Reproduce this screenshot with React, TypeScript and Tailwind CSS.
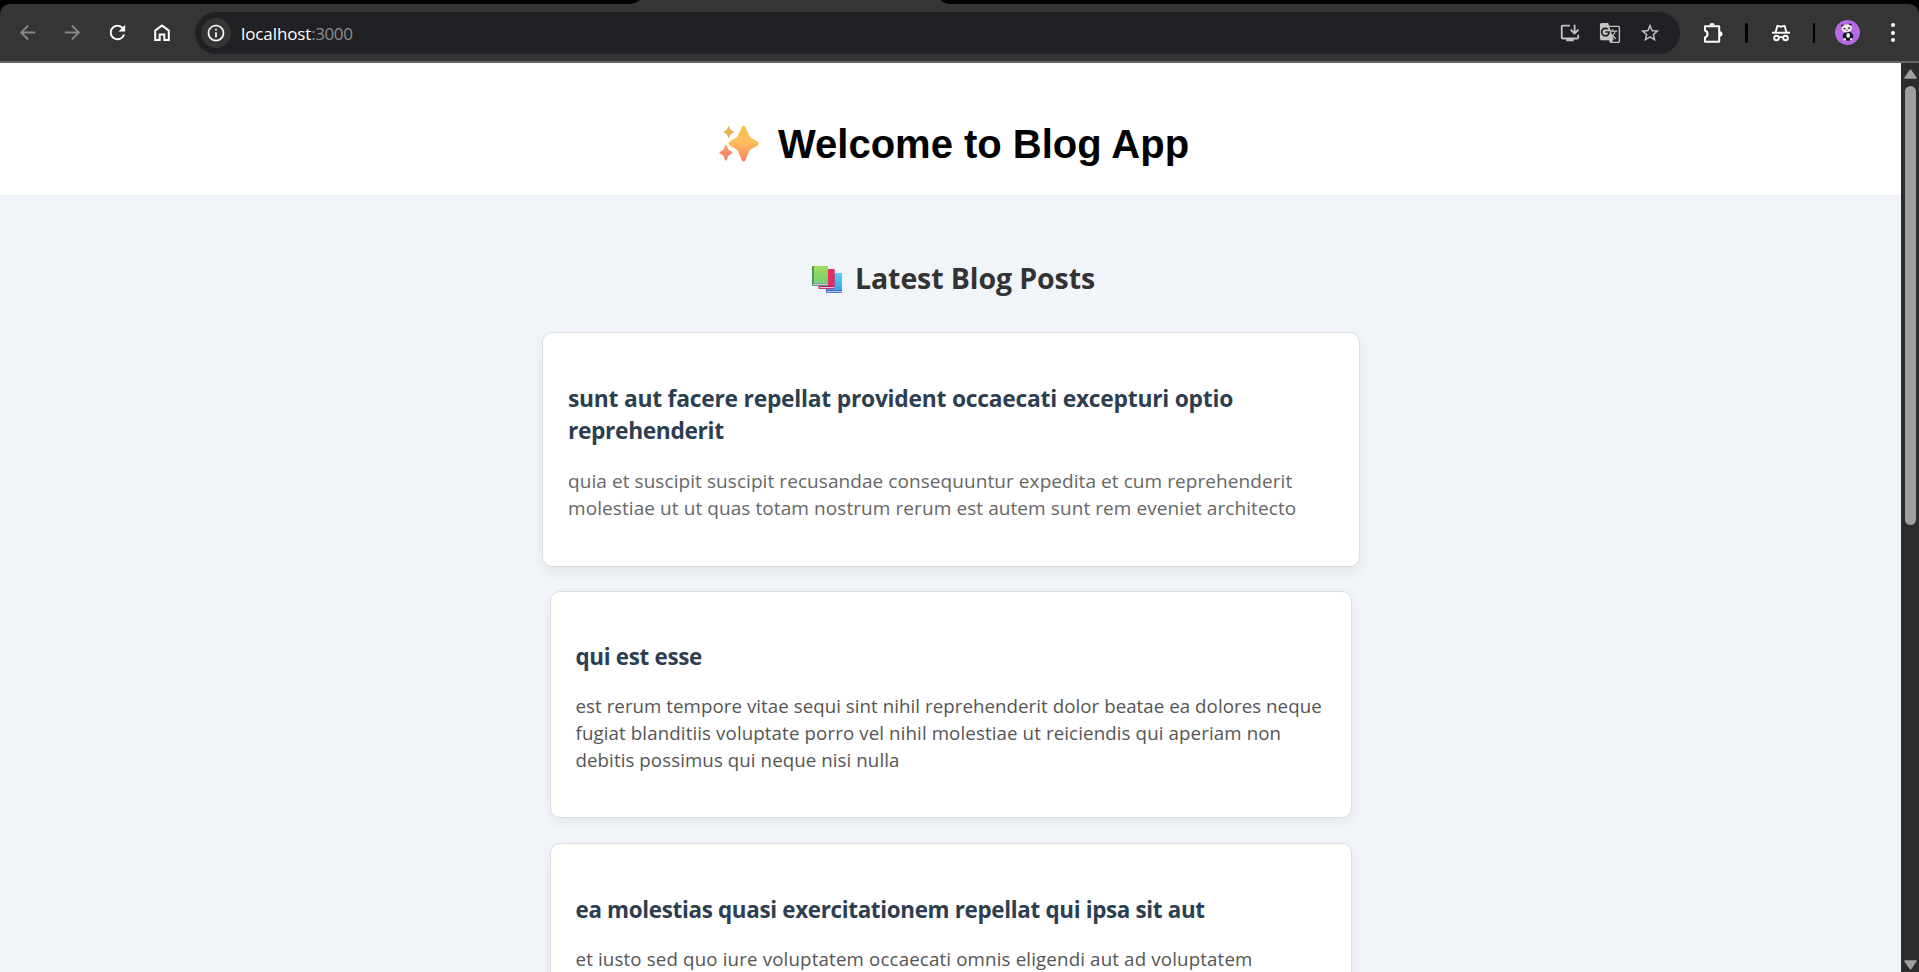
import React from "react";
import {
  MdArrowBack,
  MdArrowForward,
  MdGTranslate,
  MdInfoOutline,
  MdInstallDesktop,
  MdRefresh,
  MdStarBorder,
} from "react-icons/md";

type Line = { text: string; tracking: string };
type Post = { title: Line[]; body: Line[]; box: string; titleSize: string; bodySize: string };

const posts: Post[] = [
  {
    box: "mb-6 h-[235px] w-[818px] pt-[50px] pl-[25.5px] shadow-[0_6px_12px_rgba(0,0,0,0.06)]",
    titleSize: "text-[22.8px] mb-[21px]",
    bodySize: "text-[19px] text-[#666]",
    title: [
      { text: "sunt aut facere repellat provident occaecati excepturi optio", tracking: "tracking-[-0.23px]" },
      { text: "reprehenderit", tracking: "tracking-[-0.38px]" },
    ],
    body: [
      { text: "quia et suscipit suscipit recusandae consequuntur expedita et cum reprehenderit", tracking: "tracking-[0.07px]" },
      { text: "molestiae ut ut quas totam nostrum rerum est autem sunt rem eveniet architecto", tracking: "tracking-[0.08px]" },
    ],
  },
  {
    box: "mb-[25px] h-[227px] w-[802px] pt-[49px] pl-[25px] shadow-[0_4px_12px_rgba(0,0,0,0.06)]",
    titleSize: "text-[22.4px] mb-[19px]",
    bodySize: "text-[18.7px] text-[#555]",
    title: [{ text: "qui est esse", tracking: "tracking-[-0.3px]" }],
    body: [
      { text: "est rerum tempore vitae sequi sint nihil reprehenderit dolor beatae ea dolores neque", tracking: "tracking-[0.055px]" },
      { text: "fugiat blanditiis voluptate porro vel nihil molestiae ut reiciendis qui aperiam non", tracking: "tracking-[0.115px]" },
      { text: "debitis possimus qui neque nisi nulla", tracking: "tracking-[0.08px]" },
    ],
  },
  {
    box: "h-[227px] w-[802px] pt-[50px] pl-[25px] shadow-[0_4px_12px_rgba(0,0,0,0.06)]",
    titleSize: "text-[22.4px] mb-[19px]",
    bodySize: "text-[18.7px] text-[#555]",
    title: [{ text: "ea molestias quasi exercitationem repellat qui ipsa sit aut", tracking: "tracking-[-0.32px]" }],
    body: [
      { text: "et iusto sed quo iure voluptatem occaecati omnis eligendi aut ad voluptatem", tracking: "tracking-[0.16px]" },
    ],
  },
];

function HomeIcon() {
  return (
    <svg width="18" height="18" viewBox="0 0 18 18" fill="none" stroke="#fff" strokeWidth="2">
      <path d="M2.2 16V6.6L9 1.5l6.8 5.1V16h-4.5v-5.6H6.7V16z" />
    </svg>
  );
}

function ExtensionIcon() {
  return (
    <svg width="24" height="24" viewBox="0 0 24 24">
      <path
        d="M4 5.2h14.2v15.6H4v-4.3c1.7-.5 2.5-1.8 2.5-3.5S5.700 10 4 9.500z"
        fill="none"
        stroke="#fff"
        strokeWidth="2"
        strokeLinejoin="round"
      />
      <path d="M8.500 4.600a2.600 2.600 0 0 1 5.200 0zM18.800 10.300a2.700 2.700 0 0 1 0 5.400z" fill="#fff" />
    </svg>
  );
}

function IncognitoIcon() {
  return (
    <svg width="20" height="18" viewBox="0 0 20 18" fill="none" stroke="#fff" strokeWidth="1.900">
      <path d="M1 8.700h18" />
      <path d="M4.600 8.200L6.400 1.800l3.600.9 3.600-.9 1.800 6.400" strokeLinejoin="round" />
      <circle cx="5.500" cy="14" r="2.300" />
      <circle cx="14.500" cy="14" r="2.300" />
      <path d="M7.800 13.600c1.300-.7 3.100-.7 4.400 0" />
    </svg>
  );
}

function PandaAvatar() {
  return (
    <svg className="ml-5" width="25" height="25" viewBox="0 0 25 25">
      <circle cx="12.500" cy="12.500" r="12.500" fill="#b56ae4" />
      <ellipse cx="13" cy="16.200" rx="5.200" ry="4.600" fill="#16131a" />
      <ellipse cx="13.200" cy="15.500" rx="1.900" ry="2.400" fill="#ece8ee" />
      <circle cx="7.600" cy="6" r="1.400" fill="#16131a" />
      <circle cx="15.200" cy="4.800" r="1.400" fill="#16131a" />
      <ellipse cx="11.700" cy="8.400" rx="5.200" ry="4" fill="#f2eff3" transform="rotate(-8 11.700 8.400)" />
      <ellipse cx="9.500" cy="8.800" rx="1.300" ry=".8" fill="#29242c" />
      <ellipse cx="14" cy="8.100" rx="1.300" ry=".8" fill="#29242c" />
      <circle cx="12" cy="10.400" r=".6" fill="#29242c" />
      <circle cx="9.800" cy="19.300" r="1.200" fill="#f2eff3" />
      <circle cx="16.100" cy="19.100" r="1.200" fill="#f2eff3" />
    </svg>
  );
}

function Sparkles() {
  return (
    <svg width="40" height="36" viewBox="0 0 40 36" role="img" aria-label="sparkles">
      <defs>
        <linearGradient id="spark" x1="0" y1="0" x2="0" y2="1">
          <stop offset="0" stopColor="#f5c04f" />
          <stop offset="0.45" stopColor="#fdbf5c" />
          <stop offset="1" stopColor="#fb8065" />
        </linearGradient>
        <linearGradient id="sparkTop" x1="0" y1="0" x2="0" y2="1">
          <stop offset="0" stopColor="#ecbc50" />
          <stop offset="1" stopColor="#eda563" />
        </linearGradient>
        <linearGradient id="sparkLow" x1="0" y1="0" x2="0" y2="1">
          <stop offset="0" stopColor="#fd9a6c" />
          <stop offset="1" stopColor="#fa7a6c" />
        </linearGradient>
      </defs>
      <path
        d="M22.700 1.500c.5-1.900 3.300-1.900 3.800 0l3.200 6.900c.8 2 1.700 3.300 3.700 4.100l5.300 3.200c1.400.8 1.400 3 0 3.700l-5.300 3c-2 .9-3.100 2-3.800 4.100l-3.100 7.500c-.5 1.700-3.300 1.700-3.800 0l-3.100-7.500c-.7-2.100-1.800-3.200-3.800-4.100l-5.300-3c-1.400-.7-1.400-2.900 0-3.700l5.300-3.200c2-.8 2.900-2.100 3.700-4.100z"
        fill="url(#spark)"
      />
      <path
        d="M9.100.7c.3-.8 1-.8 1.300 0l1.300 3.100 2.700 1.600c.7.3.7 1 0 1.300l-2.700 1.500-1.300 3c-.3.800-1 .8-1.300 0L7.800 8.200 5.100 6.700c-.7-.3-.7-1 0-1.300l2.700-1.600z"
        fill="url(#sparkTop)"
      />
      <path
        d="M6.200 19.500c.3-.9 1.200-.9 1.500 0l1.700 3.900 3.600 2.700c.7.400.7 1 0 1.400l-3.600 2.300-1.700 4.300c-.3.9-1.200.9-1.500 0l-1.700-4.300L.9 27.500c-.7-.4-.7-1 0-1.400l3.600-2.700z"
        fill="url(#sparkLow)"
      />
    </svg>
  );
}

function Books() {
  return (
    <svg width="30" height="27" viewBox="0 0 30 27" role="img" aria-label="books">
      <defs>
        <linearGradient id="green" x1="0" y1="0" x2="0" y2="1">
          <stop offset="0" stopColor="#a3dc53" />
          <stop offset="1" stopColor="#78cf79" />
        </linearGradient>
        <linearGradient id="blue" x1="0" y1="0" x2="0" y2="1">
          <stop offset="0" stopColor="#5accfa" />
          <stop offset="1" stopColor="#35a8ee" />
        </linearGradient>
      </defs>
      <rect x="14" y="7" width="16" height="20" rx="1" fill="#4166c4" />
      <rect x="15" y="7" width="15" height="17" rx=".6" fill="url(#blue)" />
      <rect x="15" y="25" width="15" height="1.200" fill="#b9c5ff" />
      <rect x="6.500" y="3" width="16" height="20" rx="1" fill="#a91b52" />
      <rect x="8" y="3" width="14.500" height="17.200" rx=".6" fill="#e32f63" />
      <rect x="7.500" y="21" width="15" height="1.200" fill="#f3bfe6" />
      <rect x="0" y="0" width="16" height="20" rx="1" fill="#43904f" />
      <rect x="1.800" y="0" width="14.200" height="17" rx=".6" fill="url(#green)" />
      <rect x="1" y="17.600" width="15" height="1.600" fill="#d9c3ec" />
    </svg>
  );
}

function Toolbar() {
  return (
    <div className="h-[63px] shrink-0 bg-black">
      <div className="flex h-1 justify-start pl-[630px]">
        <div className="h-1 w-[320px] bg-[#353535] [clip-path:polygon(3%_0,97%_0,98%_60%,100%_100%,0_100%,2%_60%)]" />
      </div>
      <div className="flex h-[59px] items-center rounded-t-[10px] border-b-2 border-[#666] bg-[#353535] pl-[5px]">
        <div className="flex w-[45px] justify-center text-[#868686]">
          <MdArrowBack size={23} />
        </div>
        <div className="flex w-[45px] justify-center text-[#868686]">
          <MdArrowForward size={23} />
        </div>
        <div className="flex w-[45px] justify-center text-white">
          <MdRefresh size={23} />
        </div>
        <div className="flex w-[44px] justify-center">
          <HomeIcon />
        </div>
        <div className="ml-[11px] flex h-[42px] w-[1485px] items-center rounded-full bg-[#202124] pl-1.5 pr-[19px]">
          <div className="flex size-[30px] items-center justify-center rounded-full bg-[#353535] text-white">
            <MdInfoOutline size={20} />
          </div>
          <div className="ml-2.5 flex-1 pt-0.5 text-[17px] leading-6">
            <span className="tracking-[-0.1px] text-white">localhost</span>
            <span className="tracking-[-0.45px] text-[#8e8e8e]">:3000</span>
          </div>
          <div className="flex gap-[18px] text-[#c4c4c4]">
            <MdInstallDesktop size={22} />
            <MdGTranslate size={22} />
            <MdStarBorder size={22} />
          </div>
        </div>
        <div className="ml-[21px]">
          <ExtensionIcon />
        </div>
        <div className="ml-5 h-5 w-[2.5px] rounded-full bg-black" />
        <div className="ml-[23px]">
          <IncognitoIcon />
        </div>
        <div className="ml-[22px] h-5 w-[2.5px] rounded-full bg-black" />
        <PandaAvatar />
        <div className="ml-[30.5px] flex flex-col gap-[3.500px]">
          <span className="size-1 rounded-full bg-white" />
          <span className="size-1 rounded-full bg-white" />
          <span className="size-1 rounded-full bg-white" />
        </div>
      </div>
    </div>
  );
}

function PostCard({ post }: { post: Post }) {
  return (
    <article className={`shrink-0 rounded-[10px] border border-[#ddd] bg-white whitespace-nowrap ${post.box}`}>
      <h3 className={`font-bold leading-8 text-[#2c3e50] ${post.titleSize}`}>
        {post.title.map((line) => (
          <span key={line.text} className={`block ${line.tracking}`}>
            {line.text}
          </span>
        ))}
      </h3>
      <p className={`leading-[27px] ${post.bodySize}`}>
        {post.body.map((line) => (
          <span key={line.text} className={`block ${line.tracking}`}>
            {line.text}
          </span>
        ))}
      </p>
    </article>
  );
}

function Scrollbar() {
  return (
    <div className="flex w-[18px] shrink-0 flex-col items-center bg-[#2c2c2c] pt-1.5 pb-[2px] pl-px">
      <svg width="13" height="10" viewBox="0 0 13 10">
        <path d="M6.500 1.200L12 9H1z" fill="#9f9f9f" stroke="#9f9f9f" strokeWidth="1.500" strokeLinejoin="round" />
      </svg>
      <div className="mt-[7px] h-[439px] w-[11px] rounded-full bg-[#9f9f9f]" />
      <svg className="mt-auto" width="13" height="10" viewBox="0 0 13 10">
        <path d="M6.500 8.800L12 1H1z" fill="#9f9f9f" stroke="#9f9f9f" strokeWidth="1.500" strokeLinejoin="round" />
      </svg>
    </div>
  );
}

export default function App() {
  return (
    <div className="flex h-[972px] w-[1919px] flex-col overflow-hidden font-['Open_Sans','Noto_Sans',sans-serif]">
      <Toolbar />
      <div className="flex min-h-0 flex-1">
        <main className="flex min-w-0 flex-1 flex-col overflow-hidden bg-[#f1f5fa]">
          <header className="flex h-[132px] shrink-0 items-start bg-white pt-[58px] pl-[719px]">
            <div className="mt-[5px]">
              <Sparkles />
            </div>
            <h1 className="ml-[19px] font-['Liberation_Sans',Arial,sans-serif] text-[40px] leading-[46px] font-bold text-black">
              Welcome to Blog App
            </h1>
          </header>
          <div className="flex items-start pt-[58px] pl-[812px]">
            <div className="mt-[13px]">
              <Books />
            </div>
            <h2 className="mt-px ml-[13px] text-[28.5px] leading-[48px] font-bold tracking-[-0.1px] text-[#333]">Latest Blog Posts</h2>
          </div>
          <div className="mt-[30px] flex flex-col items-center">
            {posts.map((post) => (
              <PostCard key={post.title[0].text} post={post} />
            ))}
          </div>
        </main>
        <Scrollbar />
      </div>
    </div>
  );
}
